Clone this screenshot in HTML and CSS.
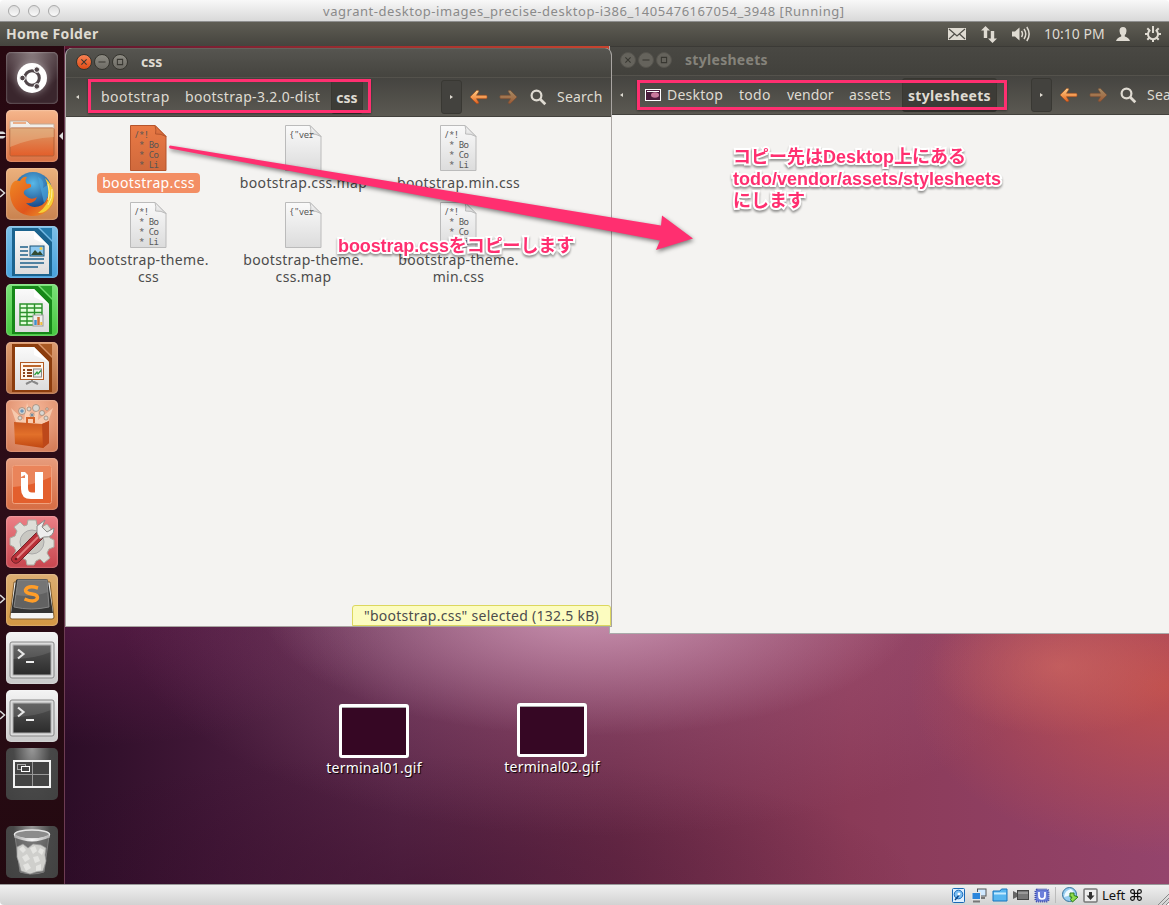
FILE: index.html
```html
<!DOCTYPE html>
<html lang="ja">
<head>
<meta charset="utf-8">
<title>vagrant-desktop</title>
<link rel="stylesheet" href="styles.css">
</head>
<body>
<svg class="defs" width="0" height="0">
  <defs>
    <linearGradient id="paper" x1="0" y1="0" x2="0" y2="1"><stop offset="0" stop-color="#fafafa"/><stop offset="1" stop-color="#dcdcdc"/></linearGradient>
    <linearGradient id="paperSel" x1="0" y1="0" x2="0" y2="1"><stop offset="0" stop-color="#ea7a45"/><stop offset="1" stop-color="#d0693c"/></linearGradient>
    <linearGradient id="arrowFill" x1="0" y1="0" x2="0" y2="1"><stop offset="0" stop-color="#ffd08a"/><stop offset=".6" stop-color="#f29148"/><stop offset="1" stop-color="#dc5a1c"/></linearGradient>
    <linearGradient id="folder" x1="0" y1="0" x2="0" y2="1"><stop offset="0" stop-color="#dc9a68"/><stop offset="1" stop-color="#e35e2a"/></linearGradient>
    <linearGradient id="dark" x1="0" y1="0" x2="0" y2="1"><stop offset="0" stop-color="#555"/><stop offset="1" stop-color="#2b2b2b"/></linearGradient>
    <linearGradient id="metal" x1="0" y1="0" x2="1" y2="0"><stop offset="0" stop-color="#aaa"/><stop offset=".5" stop-color="#f4f4f4"/><stop offset="1" stop-color="#b5b5b5"/></linearGradient>
    <linearGradient id="bag" x1="0" y1="0" x2="0" y2="1"><stop offset="0" stop-color="#c9551f"/><stop offset=".5" stop-color="#e2702a"/><stop offset="1" stop-color="#c04712"/></linearGradient>
    <radialGradient id="globe" cx=".5" cy=".3" r=".7"><stop offset="0" stop-color="#58b8e8"/><stop offset="1" stop-color="#123c7e"/></radialGradient>
    <linearGradient id="fox" x1="0" y1="0" x2="1" y2="1"><stop offset="0" stop-color="#f08a24"/><stop offset=".6" stop-color="#e0561c"/><stop offset="1" stop-color="#f0a02c"/></linearGradient>
    <g id="nav-arrow"><path d="M1 8 L7.500 1.500 Q9.500 .5 9.800 2.500 L7.500 6.300 H17.500 Q19 8 17.500 9.700 H7.500 L9.800 13.500 Q9.500 15.500 7.500 14.500Z" fill="url(#arrowFill)" stroke="#9e4a1c" stroke-width=".6"/></g>
    <g id="lens"><circle cx="6.500" cy="6.500" r="4.900" fill="none" stroke="#dfdbd2" stroke-width="2.200"/><path d="M10.300 10.300 L15.300 15.300" stroke="#dfdbd2" stroke-width="2.700"/></g>
    <g id="page-shape"><path d="M.5 .5 H25 L36 11.500 V45.500 H.5Z"/><path class="fold" d="M25 .5 Q26.500 5 25.500 9 Q31 8.500 36 11.500Z"/></g>
    <g id="terminal"><rect x="4" y="10" width="44" height="36" rx="2" fill="#dcdcdc" stroke="#888"/><rect x="7" y="13" width="38" height="30" fill="url(#dark)" stroke="#aaa"/><path d="M7 13H45V20Q28 27 7 27Z" fill="#fff" opacity=".1"/><path d="M12 17.500 L17.500 22 L12 26.500" fill="none" stroke="#e6e6e6" stroke-width="2.200"/><path d="M20 30H28" stroke="#eee" stroke-width="2"/></g>
    <g id="office-page"><path d="M9 5H28L43 20V48H9Z" fill="url(#paper)"/><path d="M28 5L43 20L28 13Z" fill="#fff"/></g>
  </defs>
</svg>

<header class="mac-title"><i></i><i></i><i></i><span>vagrant-desktop-images_precise-desktop-i386_1405476167054_3948 [Running]</span></header>

<div class="panel">
  <b>Home Folder</b>
  <div class="indicators">
    <svg class="ind-mail" width="18" height="12" viewBox="0 0 18 12"><rect width="18" height="12" fill="#dfdbd2"/><path d="M1 1 L9 8 L17 1 M1 11 L6.500 6 M17 11 L11.500 6" fill="none" stroke="#504f49" stroke-width="1.200"/></svg>
    <svg class="ind-net" width="18" height="17" viewBox="0 0 18 17"><path d="M5.500 0 L10 4.500 H7.200 V12 H3.800 V4.500 H1Z M12.500 17 L8 12.500 H10.800 V5 H14.200 V12.500 H17Z" fill="#dfdbd2"/></svg>
    <svg class="ind-vol" width="20" height="16" viewBox="0 0 20 16"><path d="M0 5.500 H3 L7.500 1.500 V14.500 L3 10.500 H0Z" fill="#dfdbd2"/><path d="M9.500 5 Q11.500 8 9.500 11 M12 3 Q15.500 8 12 13 M14.800 1 Q19.500 8 14.800 15" fill="none" stroke="#dfdbd2" stroke-width="1.500"/></svg>
    <span>10:10 PM</span>
    <svg class="ind-user" width="14" height="14" viewBox="0 0 14 14"><path d="M7 0 Q10.500 0 10.500 4 Q10.300 7 8.800 8 V9.500 Q13 10.500 14 14 H0 Q1 10.500 5.200 9.500 V8 Q3.700 7 3.500 4 Q3.500 0 7 0Z" fill="#dfdbd2"/></svg>
    <svg class="ind-gear" width="16" height="16" viewBox="0 0 16 16"><g fill="none" stroke="#dfdbd2"><path d="M5.300 4 A5 5 0 1 0 10.700 4" stroke-width="2"/><path d="M8 0V7 M8 13V16 M0 8H3 M13 8H16 M2.300 2.300L4.500 4.500 M13.700 2.300L11.500 4.500 M2.300 13.700L4.500 11.500 M13.700 13.700L11.500 11.500" stroke-width="2"/></g></svg>
  </div>
</div>

<main class="desktop">
  <nav class="launcher">
    <div class="tile dash"><svg viewBox="0 0 52 52"><circle cx="26" cy="26" r="15" fill="#fff"/><circle cx="26" cy="26" r="7.300" fill="none" stroke="#51464a" stroke-width="3"/><g fill="#51464a" stroke="#fff" stroke-width="1"><circle cx="16.500" cy="26" r="2.800"/><circle cx="30.800" cy="17.600" r="2.800"/><circle cx="30.800" cy="34.400" r="2.800"/></g></svg></div>
    <div class="tile files"><svg viewBox="0 0 52 52"><path d="M4 11 H21 L24 14 H48 V20 H4Z" fill="#f2eee9" stroke="#c4a893"/><path d="M7 13H20" stroke="#ecae86" stroke-width="2"/><rect x="4" y="18" width="44" height="28" rx="1.500" fill="url(#folder)" stroke="#b36036"/><path d="M4 18H48V27Q25 28 4 37Z" fill="#e9c59c" opacity=".4"/></svg><svg class="run" viewBox="0 0 6 12"><path d="M0 3H3.500L5 4.500H0ZM0 7.500H5L3.500 9H0Z" fill="#ddd" stroke="#ddd"/></svg><em class="focus"></em></div>
    <div class="tile firefox"><svg viewBox="0 0 52 52"><circle cx="27" cy="23" r="19" fill="url(#globe)"/><path d="M32 9 Q39 12 37 20 L43 16 Q45 28 38 35" fill="#4aa7de" opacity=".65"/><path d="M5 18 Q8 11 14 13 Q17 8 21 9 Q18 13 21 16 Q26 15 25 19 L19 22 Q16 25 20 28 Q25 33 31 29 Q29 36 20 35 Q27 42 36 37 Q44 31 43 17 Q52 29 45 39 Q37 49 25 48 Q9 46 5 32 Q3 24 5 18Z" fill="url(#fox)"/><path d="M39 10 Q52 22 46 36 Q40 46 32 45 Q44 36 42 27 Q43 18 39 10Z" fill="#f6cf37"/><path d="M42 16 Q45 25 42 32 M46 21 Q47 30 42 37" stroke="#fff0a0" fill="none"/></svg><svg class="run" viewBox="0 0 6 12"><path d="M0 2L4.500 6L0 10" fill="none" stroke="#ddd" stroke-width="1.500"/></svg></div>
    <div class="tile writer"><svg viewBox="0 0 52 52"><path d="M6 2H32L46 16V50H6Z" fill="#1b638e"/><path d="M34 2H46V14Z" fill="#257bac"/><use href="#office-page"/><path d="M14 21H22M14 25H22M14 29H22M14 33H38M14 37H38M14 41H32" stroke="#1f618a" stroke-width="1.700"/><rect x="24" y="20" width="14" height="10" fill="#8dc9f0" stroke="#185377"/><path d="M25 29L29 24L32 27L34 25L37 29Z" fill="#334b31"/><circle cx="35" cy="22.500" r="1.500" fill="#f6cc47"/></svg></div>
    <div class="tile calc"><svg viewBox="0 0 52 52"><path d="M6 2H32L46 16V50H6Z" fill="#168718"/><path d="M34 2H46V14Z" fill="#2aa22b"/><use href="#office-page"/><rect x="14" y="20" width="22" height="21" fill="#e4ffdc"/><path d="M14 20H36V41H14ZM14 24H36M14 28.500H36M14 32.500H36M14 37H36M21 20V41M28.500 20V41" fill="none" stroke="#2b912b" stroke-width="1.400"/><rect x="27" y="31" width="10" height="11" fill="#eee" stroke="#999"/><path d="M29.500 36V41" stroke="#3f8fcf" stroke-width="2.500"/><path d="M32.500 33V41" stroke="#cd7037" stroke-width="2.500"/><path d="M35.300 38V41" stroke="#f2c13d" stroke-width="2"/></svg></div>
    <div class="tile impress"><svg viewBox="0 0 52 52"><path d="M6 2H32L46 16V50H6Z" fill="#8c3d0e"/><path d="M34 2H46V14Z" fill="#a95925"/><use href="#office-page"/><rect x="14.500" y="20.500" width="23" height="17" fill="#fff5ec" stroke="#b25a24"/><path d="M17 24H35" stroke="#bd672d" stroke-width="2"/><path d="M17 28H19M17 31H19M17 34H19M21 28H26M21 31H26M21 34H26" stroke="#8c451e" stroke-width="1.800"/><rect x="27.500" y="27" width="8" height="8" fill="#eee" stroke="#888"/><path d="M28.500 33L31 30L32 32L35 28.500" fill="none" stroke="#269b37" stroke-width="1.200"/><path d="M26 38V39L20 42M26 39L32 42" stroke="#888" stroke-width="2" fill="none"/></svg></div>
    <div class="tile software"><svg viewBox="0 0 52 52"><path d="M11 25L5 8L18 20L21 3L26 20L33 4L32 20L47 8L41 25Z" fill="#ffe4cc" opacity=".6"/><g fill="#d9d7d2" stroke="#98816e" stroke-width=".7"><circle cx="16" cy="11" r="3.500"/><circle cx="30" cy="8" r="3.500"/><circle cx="23" cy="9" r="2"/><circle cx="36" cy="13" r="2.500"/><circle cx="14" cy="18" r="2"/><circle cx="26" cy="15" r="2"/><circle cx="41" cy="9" r="1.300"/><circle cx="40" cy="18" r="2"/></g><circle cx="16" cy="11" r="1.800" fill="#6a94b8"/><circle cx="26" cy="15" r="1" fill="#51738f"/><path d="M8 22L36 24L43 21V43L37 48L9 44Z" fill="url(#bag)"/><path d="M36 24L37 48L43 43V21Z" fill="#bd481a"/><path d="M21 23V18H28V23" fill="none" stroke="#d46227" stroke-width="2"/></svg></div>
    <div class="tile one"><svg viewBox="0 0 52 52"><rect x="6.500" y="7.500" width="39" height="38" rx="2" fill="#e35f2d" stroke="#f0a17d"/><path d="M7 8H45V19Q26 28 7 29Z" fill="#f0a27f" opacity=".55"/><path d="M15 14H19L22 17V30Q22 34.500 26 34.500H29V14H37V41H25Q15 41 15 31V20H19V17L15 19Z" fill="#fff"/></svg></div>
    <div class="tile settings"><svg viewBox="0 0 52 52"><path d="M22 4H30L31 9L36 11L41 8L45 13L42 18L44 22L48 24V31L43 33L41 37L44 42L38 47L34 43L30 45L28 49H21L20 44L16 42L11 45L7 40L10 35L8 31L4 29V22L9 20L11 15L8 11L14 6L18 10L21 9Z" fill="#deded8" stroke="#aaa89f"/><circle cx="26" cy="26" r="12" fill="#c9c8c2" stroke="#aaa"/><circle cx="26" cy="26" r="4" fill="#e17171"/><path d="M7 40L31 16L37 22L13 46Q9 49 6 45Q4 43 7 40Z" fill="#b83038" stroke="#73242a"/><path d="M11 42L32 21" stroke="#e28182" stroke-width="2"/><path d="M31 17V10L39 4L36 11L41 16L48 12Q48 22 38 21L34 23Z" fill="#eee" stroke="#8b8b88"/><circle cx="10" cy="43" r="1.300" fill="#601e21"/></svg></div>
    <div class="tile sublime"><svg viewBox="0 0 52 52"><path d="M8 8H44L48 43Q48 45 46 45H6Q4 45 4 43Z" fill="#f5f5f4" stroke="#805c2e"/><path d="M10 6Q11 5 13 5H40Q42 5 42 7L47 39H5Z" fill="#333"/><path d="M12 6H41L43 33Q25 37 8 33Z" fill="#626262" stroke="#858585"/><path d="M12 6H41L42 18Q26 24 10 21Z" fill="#888" opacity=".5"/><path d="M32 14Q22 11 19.500 16Q19 19 26 20Q33 21 31 25Q28 29 18.500 25" fill="none" stroke="#ff9d28" stroke-width="3.500"/></svg><svg class="run" viewBox="0 0 6 12"><path d="M0 2L4.500 6L0 10" fill="none" stroke="#ddd" stroke-width="1.500"/></svg></div>
    <div class="tile term"><svg viewBox="0 0 52 52"><use href="#terminal"/></svg></div>
    <div class="tile term"><svg viewBox="0 0 52 52"><use href="#terminal"/></svg><svg class="run" viewBox="0 0 6 12"><path d="M0 2L4.500 6L0 10" fill="none" stroke="#ddd" stroke-width="1.500"/></svg></div>
    <div class="tile spaces"><svg viewBox="0 0 52 52"><rect x="8" y="13" width="36" height="26" fill="#444" stroke="#f3f3f3" stroke-width="2"/><path d="M26.500 14V38M9 26.500H43" stroke="#999"/><rect x="11.500" y="16.500" width="8" height="5" fill="none" stroke="#aaa"/><rect x="15.500" y="18.500" width="8" height="5" fill="#444" stroke="#fff"/></svg></div>
    <div class="tile trash"><svg viewBox="0 0 52 52"><path d="M9 10L14 46Q26 50 38 46L43 10Z" fill="#777" opacity=".55" stroke="#aaa"/><path d="M11 21L17 18L22 22L27 18L35 19L40 22L39 29L40 35L37 45L30 46L24 48L15 45L13 37L11 31Z" fill="#cfcfcc" stroke="#999" stroke-width=".7"/><g fill="#e4e4e1"><path d="M13 23L17 20L20 24L17 27ZM24 22L29 20L31 25L27 28ZM34 22L38 24L36 29L32 26ZM16 31L21 28L24 33L19 36ZM27 31L32 30L34 35L29 37ZM17 39L22 37L25 42L20 45ZM30 40L35 38L35 44L30 45Z"/></g><ellipse cx="26" cy="8.500" rx="17.500" ry="4.500" fill="#8b8b8b" stroke="#e5e5e5" stroke-width="1.500"/><path d="M8.500 10Q26 18 43.500 10" fill="none" stroke="url(#metal)" stroke-width="3"/></svg></div>
  </nav>

  <section class="window stylesheets">
    <div class="titlebar"><span class="wbtn"><svg viewBox="0 0 16 16"><path d="M5 5L11 11M11 5L5 11"/></svg></span><span class="wbtn"><svg viewBox="0 0 16 16"><path d="M4 8H12"/></svg></span><span class="wbtn"><svg viewBox="0 0 16 16"><path d="M5 5H11V11H5Z"/></svg></span><b>stylesheets</b></div>
    <div class="toolbar">
      <span class="tri-left"></span>
      <div class="crumbs">
        <span class="c-desktop"><svg width="16" height="12" viewBox="0 0 16 12"><rect x=".5" y=".5" width="15" height="11" fill="#4a1c3b" stroke="#fff"/><path d="M2 2.500H14" stroke="#fff"/><ellipse cx="10" cy="6" rx="4" ry="2.800" fill="#c9789c"/></svg>Desktop</span><span class="c-todo">todo</span><span class="c-vendor">vendor</span><span class="c-assets">assets</span><b>stylesheets</b>
      </div>
      <span class="next"></span>
      <svg class="nav" viewBox="0 0 19 16"><use href="#nav-arrow"/></svg><svg class="nav fwd" viewBox="0 0 19 16"><use href="#nav-arrow"/></svg>
      <svg class="lens" viewBox="0 0 17 17"><use href="#lens"/></svg><span class="search">Search</span>
    </div>
  </section>

  <section class="window css">
    <div class="titlebar"><span class="wbtn close"><svg viewBox="0 0 16 16"><path d="M5 5L11 11M11 5L5 11"/></svg></span><span class="wbtn"><svg viewBox="0 0 16 16"><path d="M4 8H12"/></svg></span><span class="wbtn"><svg viewBox="0 0 16 16"><path d="M5 5H11V11H5Z"/></svg></span><b>css</b></div>
    <div class="toolbar">
      <span class="tri-left"></span>
      <div class="crumbs"><span class="c-boot">bootstrap</span><span class="c-dist">bootstrap-3.2.0-dist</span><b>css</b></div>
      <span class="next"></span>
      <svg class="nav" viewBox="0 0 19 16"><use href="#nav-arrow"/></svg><svg class="nav fwd" viewBox="0 0 19 16"><use href="#nav-arrow"/></svg>
      <svg class="lens" viewBox="0 0 17 17"><use href="#lens"/></svg><span class="search">Search</span>
    </div>
    <div class="files-grid">
      <div class="file selected"><div class="doc"><svg viewBox="0 0 37 46"><use href="#page-shape"/></svg><pre>/*!
 * Bo
 * Co
 * Li</pre></div><span>bootstrap.css</span></div>
      <div class="file"><div class="doc"><svg viewBox="0 0 37 46"><use href="#page-shape"/></svg><pre>{"ver</pre></div><span>bootstrap.css.map</span></div>
      <div class="file"><div class="doc"><svg viewBox="0 0 37 46"><use href="#page-shape"/></svg><pre>/*!
 * Bo
 * Co
 * Li</pre></div><span>bootstrap.min.css</span></div>
      <div class="file"><div class="doc"><svg viewBox="0 0 37 46"><use href="#page-shape"/></svg><pre>/*!
 * Bo
 * Co
 * Li</pre></div><span>bootstrap-theme.<br>css</span></div>
      <div class="file"><div class="doc"><svg viewBox="0 0 37 46"><use href="#page-shape"/></svg><pre>{"ver</pre></div><span>bootstrap-theme.<br>css.map</span></div>
      <div class="file"><div class="doc"><svg viewBox="0 0 37 46"><use href="#page-shape"/></svg><pre>/*!
 * Bo
 * Co
 * Li</pre></div><span>bootstrap-theme.<br>min.css</span></div>
    </div>
    <div class="status">"bootstrap.css" selected (132.5 kB)</div>
  </section>

  <div class="shortcut one-gif"><i></i><span>terminal01.gif</span></div>
  <div class="shortcut two-gif"><i></i><span>terminal02.gif</span></div>
</main>

<footer class="vm-bar">
  <svg width="14" height="15" viewBox="0 0 14 15"><rect x=".5" y=".5" width="12" height="14" rx="1" fill="#dff0ff" stroke="#1868b6"/><circle cx="6.500" cy="6.500" r="4.300" fill="#7cc0f5" stroke="#1868b6"/><path d="M3 12L8 6" stroke="#0d4a8d" stroke-width="1.500"/><circle cx="7" cy="6" r="1.500" fill="#fff"/></svg>
  <svg width="16" height="15" viewBox="0 0 16 15"><rect x="6.500" y="1" width="8.500" height="7" fill="#cfe8ff" stroke="#555"/><path d="M9 10H14" stroke="#777" stroke-width="2"/><rect x="1" y="4.500" width="8.500" height="7" fill="#2c86dc" stroke="#e8e8e8"/><path d="M2 13.500H9" stroke="#777" stroke-width="2"/></svg>
  <svg width="16" height="14" viewBox="0 0 16 14"><path d="M1 3H8L9.500 1H15V13H1Z" fill="#58b6ef" stroke="#1974bd"/><path d="M2 5.500H14" stroke="#c5ebff" stroke-width="2"/></svg>
  <svg width="16" height="12" viewBox="0 0 16 12"><path d="M0 2L4 4V8L0 10Z" fill="#666"/><rect x="4.500" y="1.500" width="11" height="9" fill="#777" stroke="#444"/><path d="M5 4H15" stroke="#bbb"/></svg>
  <svg width="16" height="15" viewBox="0 0 16 15"><rect x="1.500" y="1.500" width="13" height="12" rx="2" fill="#6d80da" stroke="#3e4dad" stroke-dasharray="1 1" stroke-width="2"/><path d="M5 4V8Q5 11 8 11Q11 11 11 8V4" fill="none" stroke="#fff" stroke-width="1.700"/></svg>
  <s></s>
  <svg width="17" height="16" viewBox="0 0 17 16"><circle cx="7.500" cy="7.500" r="7" fill="#96cdf0" stroke="#36729b"/><path d="M2 10Q3 3 9 2L12 5L6 9Z" fill="#eef9ff"/><path d="M8 6H12V8.500L16 10L10.500 15L8.500 12.500L10 10H8Z" fill="#8fdc4d" stroke="#317e18"/></svg>
  <svg width="15" height="15" viewBox="0 0 15 15"><rect x="1" y="1" width="13" height="13" rx="1" fill="#eee" stroke="#777" stroke-width="1.500"/><path d="M7.500 12L3.500 7.500H6V4H9V7.500H11.500Z" fill="#333"/></svg>
  <span>Left</span>
  <svg class="cmd" width="12" height="12" viewBox="0 0 11 11"><path d="M4 4H7V7H4ZM4 4H2.300A1.700 1.700 0 1 1 4 2.300ZM7 4V2.300A1.700 1.700 0 1 1 8.700 4ZM7 7H8.700A1.700 1.700 0 1 1 7 8.700ZM4 7V8.700A1.700 1.700 0 1 1 2.300 7Z" fill="none" stroke="#111" stroke-width="1.100"/></svg>
  <svg class="grip" width="12" height="12" viewBox="0 0 12 12"><path d="M1 12L12 1M5 12L12 5M9 12L12 9" stroke="#888"/></svg>
</footer>

<div class="annotations">
  <div class="frame frame-left"></div>
  <div class="frame frame-right"></div>
  <svg class="arrow" width="1169" height="300" viewBox="0 0 1169 300"><path d="M170 145.500L661 225.500L662 215.500L693 238.500L656 250L660 240.500L170 148.500Q168 147 170 145.500Z" fill="#ff2f70"/></svg>
  <p class="note note-left"><span>boostrap.css</span>をコピーします</p>
  <p class="note note-right">コピー先は<span>Desktop</span>上にある<br><span class="path">todo/vendor/assets/stylesheets</span><br>にします</p>
</div>
</body>
</html>
```
FILE: styles.css
```css
* { box-sizing: border-box; }
body { margin: 0; width: 1169px; height: 905px; overflow: hidden; display: flex; flex-direction: column; font: 14px/18px "Noto Sans", "Noto Sans CJK JP", sans-serif; color: #dfdbd2; position: relative; background: #fff; }
svg { display: block; flex: none; }
.defs { position: absolute; }

.mac-title { height: 22px; flex: none; display: flex; align-items: center; gap: 8px; padding-left: 8px; background: linear-gradient(#f8f8f8, #d9d9d9); border-bottom: 1px solid #8e8e8e; border-radius: 4px 4px 0 0; color: #8a8a8a; font-size: 13px; }
.mac-title i { width: 12px; height: 12px; border-radius: 50%; border: 1px solid #aaa; background: linear-gradient(#ddd, #fafafa); }
.mac-title span { margin-left: 255px; letter-spacing: .54px; white-space: nowrap; }

.panel { height: 24px; flex: none; display: flex; justify-content: space-between; padding: 0 8px 0 6px; align-items: center; background: linear-gradient(#5f5d54, #45443e); }
.panel b { letter-spacing: .3px; }
.indicators { display: flex; align-items: center; }
.ind-net { margin-left: 14px; }
.ind-vol { margin-left: 14px; }
.indicators span { margin-left: 12px; width: 61px; white-space: nowrap; }
.ind-user { margin-left: 11px; }
.ind-gear { margin-left: 15px; }

.desktop { height: 838px; flex: none; position: relative; overflow: hidden; background:
  linear-gradient(90deg, #4c1029, #7a1f33 200px, #a8332f 420px, #c8442f 612px) 0 0 / 614px 3px no-repeat,
  radial-gradient(ellipse 130px 70px at 1060px 620px, rgba(214,110,100,.55), transparent),
  radial-gradient(ellipse 260px 170px at 1169px 640px, rgba(203,82,70,.8), transparent),
  radial-gradient(ellipse 330px 130px at 590px 560px, rgba(222,172,200,.75), transparent),
  radial-gradient(ellipse 480px 220px at 600px 570px, rgba(185,110,150,.5), transparent),
  radial-gradient(ellipse 300px 130px at 90px 570px, rgba(130,40,100,.4), transparent),
  radial-gradient(ellipse 500px 130px at 420px 838px, rgba(50,8,38,.4), transparent),
  linear-gradient(90deg, #2c0d27 65px, #421838 220px, #582647 400px, #6c2c49 620px, #8a3a57 850px, #94446c 1169px); }

.launcher { width: 65px; height: 838px; padding: 6px 0 0 6px; display: flex; flex-direction: column; gap: 6px; background: linear-gradient(#270810, #2d0d18 55%, #230910); border-right: 1px solid #6d3c53; }
.tile { position: relative; width: 52px; height: 52px; flex: none; border-radius: 5px; box-shadow: inset 0 0 2px rgba(255,255,255,.6); }
.tile > svg { width: 52px; height: 52px; }
.dash { background: radial-gradient(circle at 50% 0, #8a7d80, #3a262d 65%); }
.dash svg { filter: drop-shadow(0 0 4px rgba(255,255,255,.45)); }
.files { background: linear-gradient(#f5b68c, #da7042); }
.firefox { background: linear-gradient(#ecb17d, #c9824f); }
.writer { background: linear-gradient(#7dbfe7, #47a1dc); }
.calc { background: linear-gradient(#7be178, #46c83f); }
.impress { background: linear-gradient(#dd9c71, #b86d3f); }
.software { background: radial-gradient(circle at 50% 20%, #f7b99b, #d17651); }
.one { background: linear-gradient(#e79c7c, #d66c43); }
.settings { background: linear-gradient(#ec8086, #c8464f); }
.sublime { background: linear-gradient(#dcad72, #d49743); }
.term { background: linear-gradient(#f4f4f4, #c9c9c9); }
.spaces, .trash { background: radial-gradient(ellipse at 50% 0, #999, #484848 50%, #414141); box-shadow: none; }
.trash { margin-top: 20px; }
.tile > .run { position: absolute; left: -6px; top: 19px; width: 6px; height: 12px; }
.focus { position: absolute; left: 53px; top: 22px; border: 4px solid transparent; border-right-color: #ddd; border-left: 0; }

.window { position: absolute; background: #f4f3f1; display: flex; flex-direction: column; }
.css { left: 65px; top: 2px; width: 547px; height: 579px; border: 1px solid #a9a5a2; border-top: 0; border-radius: 7px 7px 0 0; overflow: hidden; }
.stylesheets { left: 609px; top: 0; width: 560px; height: 588px; overflow: hidden; border: 0 solid #aaa; border-width: 0 0 1px 1px; }
.titlebar { height: 29px; flex: none; display: flex; align-items: center; gap: 2px; padding: 0 0 2px 10px; background: linear-gradient(#565550, #45443f); border-top: 1px solid #65635c; }
.stylesheets .titlebar { padding-left: 10px; background: linear-gradient(#494843, #42413c); border-top-color: #3b3a36; color: #85837b; }
.wbtn { width: 16px; height: 16px; border-radius: 50%; background: linear-gradient(#8d8b83, #6d6b64); border: 1px solid #36352f; }
.wbtn.close { background: linear-gradient(#f78254, #df4b16); }
.stylesheets .wbtn { background: #65635c; border-color: #55534d; }
.wbtn svg { width: 14px; height: 14px; fill: none; stroke: #383731; stroke-width: 1.200; }
.titlebar b { margin-left: 11px; letter-spacing: .3px; }
.css .titlebar b { letter-spacing: 0; }
.toolbar { height: 40px; flex: none; display: flex; align-items: center; background: linear-gradient(#454440, #5b5952); border-top: 1px solid #54524c; border-bottom: 1px solid #42413c; white-space: nowrap; }
.toolbar > * { flex: none; }
.tri-left { width: 3px; margin-left: 10px; border: 2px solid transparent; border-left: 0; border-right: 3px solid #dfdbd2; }
.crumbs { display: flex; align-items: center; height: 34px; }
.crumbs > * { flex: none; }
.crumbs b { height: 34px; line-height: 33px; background: #3d3c37; border: 1px solid #383731; border-radius: 3px; text-align: center; }
.css .crumbs { width: 340px; margin-left: 22px; }
.c-boot { width: 84px; letter-spacing: .5px; }
.c-dist { width: 146px; letter-spacing: .31px; }
.css .crumbs b { width: 32px; }
.stylesheets .crumbs { width: 386px; margin-left: 22px; }
.c-desktop { display: flex; align-items: center; gap: 6px; width: 94px; letter-spacing: .25px; }
.c-todo { width: 48px; letter-spacing: .3px; }
.c-vendor { width: 62px; }
.c-assets { width: 53px; letter-spacing: .2px; }
.stylesheets .crumbs b { width: 95px; letter-spacing: .3px; }
.next { width: 21px; height: 34px; background: #43423e; border: 1px solid #393833; border-radius: 3px; display: flex; align-items: center; justify-content: center; }
.next::after { content: ""; border: 2px solid transparent; border-left: 3px solid #dfdbd2; border-right: 0; }
.nav { width: 19px; height: 16px; margin-left: 7px; }
.nav.fwd { margin-left: 11px; transform: scaleX(-1); opacity: .5; }
.lens { width: 17px; height: 17px; margin-left: 12px; }
.search { margin-left: 10px; letter-spacing: .2px; }

.files-grid { display: grid; grid-template-columns: repeat(3, 155px); grid-auto-rows: 77px; padding: 8px 0 0 5px; height: 170px; color: #4c4c4c; }
.file { display: flex; flex-direction: column; align-items: center; text-align: center; white-space: nowrap; line-height: 17px; letter-spacing: .34px; }
.file > span { margin-top: 2px; padding: 1px 5px 2px; border-radius: 4px; }
.selected > span { background: #f38e64; color: #fff; }
.doc { position: relative; width: 37px; height: 46px; flex: none; fill: url(#paper); stroke: #bbb; }
.selected .doc { fill: url(#paperSel); stroke: #b5552d; }
.doc pre { position: absolute; left: 4px; top: 5px; margin: 0; text-align: left; font: 9px/10px "Noto Sans Mono", "DejaVu Sans Mono", monospace; letter-spacing: -.5px; color: #555; }
.status { position: absolute; right: 0; bottom: 0; width: 259px; height: 21px; background: #fcfcc0; border: 1px solid #dcd75e; border-radius: 3px 3px 0 0; color: #4c4c4c; text-align: center; line-height: 20px; white-space: nowrap; letter-spacing: .27px; }

.shortcut { position: absolute; width: 110px; display: flex; flex-direction: column; align-items: center; color: #fff; text-shadow: 1px 1px 1px #000; }
.shortcut i { width: 70px; height: 54px; background: #360724; border: 3px solid #fff; border-radius: 3px; box-shadow: 0 0 1px #555, inset 0 1px #aaa; }
.shortcut span { white-space: nowrap; margin-top: 1px; letter-spacing: .22px; }
.one-gif { left: 319px; top: 658px; }
.two-gif { left: 497px; top: 657px; }

.vm-bar { height: 21px; flex: none; display: flex; align-items: center; padding-left: 952px; background: linear-gradient(#f0f0f0, #d2d2d2); border-top: 1px solid #999; border-radius: 0 0 4px 4px; color: #111; font-size: 13px; gap: 5px; }
.vm-bar s { width: 1px; height: 16px; background: #bbb; margin: 0 1px 0 0; }
.vm-bar s + svg { margin-right: -1px; }
.vm-bar span { width: 23px; margin-left: -1px; }
.vm-bar .grip { margin-left: 10px; margin-top: 7px; }

.annotations { position: absolute; inset: 0; }
.frame { position: absolute; border: 3px solid #ff2f70; box-shadow: 0 1px 2px rgba(0,0,0,.4); }
.frame-left { left: 88px; top: 79px; width: 283px; height: 34px; }
.frame-right { left: 637px; top: 80px; width: 370px; height: 30px; }
.arrow { position: absolute; left: 0; top: 0; filter: drop-shadow(1px 2px 2px rgba(0,0,0,.5)); }
.note { position: absolute; margin: 0; color: #ff2f70; font: bold 18px/22px "Liberation Sans", "Noto Sans CJK JP", sans-serif; white-space: nowrap; -webkit-text-stroke: 4px #fff; paint-order: stroke fill; filter: drop-shadow(0 2px 1px rgba(0,0,0,.4)); }
.note-left { left: 338px; top: 235px; letter-spacing: -.1px; }
.note-right { left: 733px; top: 146px; }
```
